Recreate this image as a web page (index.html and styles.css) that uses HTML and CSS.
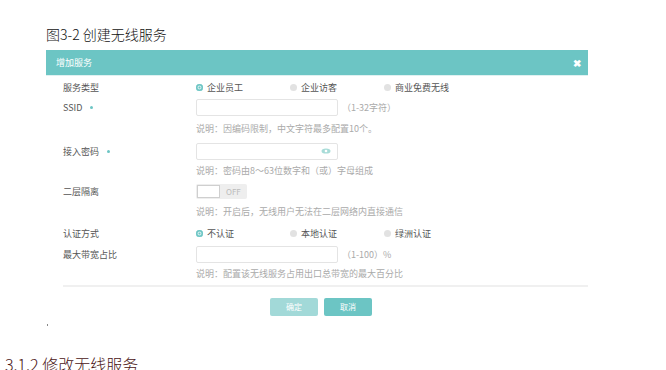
FILE: index.html
```html
<!DOCTYPE html>
<html lang="zh">
<head>
    <meta charset="UTF-8">
    <title>创建无线服务</title>
    <link rel="stylesheet" href="styles.css">
</head>
<body>
    <div class="fig-title">图3-2 创建无线服务</div>

    <div class="dialog">
        <div class="dialog-head">
            <span class="head-title">增加服务</span>
            <span class="head-close">&#x2716;</span>
        </div>
        <div class="dialog-body">
            <div class="row first">
                <div class="label">服务类型</div>
                <div class="field radios">
                    <span class="radio on">企业员工</span>
                    <span class="radio">企业访客</span>
                    <span class="radio">商业免费无线</span>
                </div>
            </div>
            <div class="row">
                <div class="label">SSID <i class="req"></i></div>
                <div class="field">
                    <span class="input"></span>
                    <span class="hint">（1-32字符）</span>
                </div>
            </div>
            <div class="note">说明：因编码限制，中文字符最多配置10个。</div>
            <div class="row">
                <div class="label">接入密码 <i class="req"></i></div>
                <div class="field">
                    <span class="input pwd">
                        <svg width="10" height="6" viewBox="0 0 10 6"><ellipse cx="5" cy="3" rx="4.5" ry="2.6" fill="#a8dcd8"/><circle cx="5" cy="3" r="1.3" fill="#fff"/></svg>
                    </span>
                </div>
            </div>
            <div class="note tight">说明：密码由8～63位数字和（或）字母组成</div>
            <div class="row">
                <div class="label">二层隔离</div>
                <div class="field">
                    <span class="toggle"><span class="knob"></span><span class="off">OFF</span></span>
                </div>
            </div>
            <div class="note short">说明：开启后，无线用户无法在二层网络内直接通信</div>
            <div class="row">
                <div class="label">认证方式</div>
                <div class="field radios">
                    <span class="radio on">不认证</span>
                    <span class="radio">本地认证</span>
                    <span class="radio">绿洲认证</span>
                </div>
            </div>
            <div class="row short">
                <div class="label">最大带宽占比</div>
                <div class="field">
                    <span class="input"></span>
                    <span class="hint">（1-100）%</span>
                </div>
            </div>
            <div class="note short">说明：配置该无线服务占用出口总带宽的最大百分比</div>
            <div class="divider"></div>
            <div class="actions">
                <span class="btn light">确定</span>
                <span class="btn">取消</span>
            </div>
        </div>
    </div>
    <div class="dot"></div>

    <div class="section-title">3.1.2 修改无线服务</div>
</body>
</html>
```

FILE: styles.css
```css
body {
    margin: 0;
    font-family: "Noto Sans CJK SC", "Liberation Sans", sans-serif;
    background: #fff;
    width: 666px;
    height: 370px;
    overflow: hidden;
}
.fig-title {
    margin: 25px 0 0 46px;
    font-size: 14px;
    line-height: 18px;
    color: #111;
    font-weight: 300;
}
.dialog {
    margin: 7px 0 0 46px;
    width: 542px;
}
.dialog-head {
    height: 25px;
    background: #6cc5c4;
    display: flex;
    align-items: center;
    justify-content: space-between;
    padding: 0 7px 0 10px;
    border-bottom: 1px solid #dff1f1;
}
.head-title {
    color: #fff;
    font-size: 9px;
}
.head-close {
    color: #fff;
    font-size: 10px;
    font-weight: bold;
}
.dialog-body {
    padding: 0 0 0 17px;
}
.row {
    display: flex;
    align-items: center;
    height: 22px;
    font-size: 9px;
    color: #555;
}
.row.first {
    margin-top: 2px;
    height: 18px;
}
.row.short {
    height: 20px;
}
.label {
    width: 133px;
    display: flex;
    align-items: center;
}
.req {
    display: inline-block;
    width: 3px;
    height: 3px;
    border-radius: 50%;
    background: #6cc5c4;
    margin-left: 8px;
}
.field {
    display: flex;
    align-items: center;
}
.radios .radio {
    width: 94px;
    display: flex;
    align-items: center;
}
.radio::before {
    content: "";
    width: 7px;
    height: 7px;
    border-radius: 50%;
    background: #e2e2e2;
    margin-right: 4px;
}
.radio.on::before {
    background: #6cc5c4;
    box-shadow: inset 0 0 0 1.5px #6cc5c4, inset 0 0 0 2.5px #d8f0ef;
}
.input {
    width: 140px;
    height: 15px;
    border: 1px solid #e4e4e4;
    border-radius: 2px;
    background: #fff;
    display: flex;
    align-items: center;
    justify-content: flex-end;
    box-sizing: content-box;
}
.input.pwd {
    width: 134px;
    padding-right: 6px;
}
.hint {
    color: #aaa;
    margin-left: 4px;
}
.note {
    height: 22px;
    line-height: 22px;
    padding-left: 133px;
    font-size: 9px;
    color: #aaa;
}
.note.short {
    height: 20px;
    line-height: 20px;
}
.note.tight {
    height: 18px;
    line-height: 18px;
}
.toggle {
    display: flex;
    width: 51px;
    height: 15px;
    background: #eeeeee;
    border-radius: 2px;
}
.knob {
    width: 23px;
    height: 13px;
    margin: 1px 0 0 1px;
    background: #fff;
    border: 1px solid #cfcfcf;
    box-sizing: border-box;
}
.off {
    font-size: 8px;
    color: #bbb;
    line-height: 15px;
    margin-left: 6px;
}
.divider {
    margin-top: 1px;
    height: 2px;
    background: #f0f0f0;
}
.actions {
    display: flex;
    gap: 6px;
    margin: 11px 0 0 207px;
}
.btn {
    width: 48px;
    height: 18px;
    line-height: 18px;
    text-align: center;
    background: #6cc5c4;
    color: #fff;
    font-size: 8px;
    border-radius: 2px;
}
.btn.light {
    background: #a2d9d8;
}
.dot {
    width: 1px;
    height: 2px;
    background: #888;
    margin: 8px 0 0 47px;
}
.section-title {
    margin: 28px 0 0 5px;
    font-size: 16px;
    color: #4a1414;
    line-height: 20px;
    font-weight: 300;
}
```
